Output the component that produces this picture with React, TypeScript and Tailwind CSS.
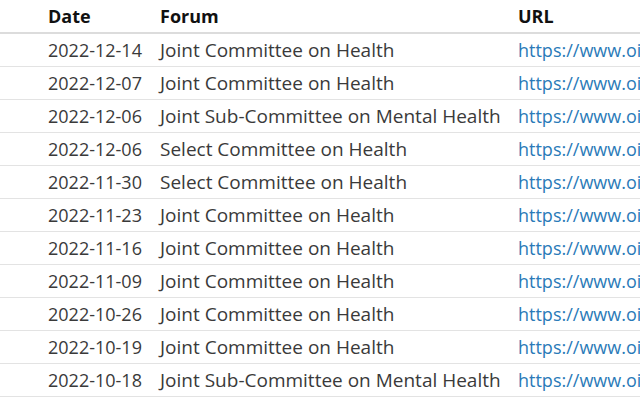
const rows: [string, string][] = [
  ["2022-12-14", "Joint Committee on Health"],
  ["2022-12-07", "Joint Committee on Health"],
  ["2022-12-06", "Joint Sub-Committee on Mental Health"],
  ["2022-12-06", "Select Committee on Health"],
  ["2022-11-30", "Select Committee on Health"],
  ["2022-11-23", "Joint Committee on Health"],
  ["2022-11-16", "Joint Committee on Health"],
  ["2022-11-09", "Joint Committee on Health"],
  ["2022-10-26", "Joint Committee on Health"],
  ["2022-10-19", "Joint Committee on Health"],
  ["2022-10-18", "Joint Sub-Committee on Mental Health"],
];

export default function App() {
  return (
    <div
      className="w-[640px] h-[400px] overflow-hidden bg-white text-[18px] text-[#3a3a3a]"
      style={{ fontFamily: '"Open Sans", "Noto Sans", sans-serif' }}
    >
      <div className="w-[900px]">
        {/* Header */}
        <div className="flex h-[34px] items-center border-b-2 border-[#dcdcdc] font-bold text-[#111]">
          <div className="w-[160px] shrink-0 pl-12">Date</div>
          <div className="w-[358px] shrink-0">Forum</div>
          <div className="flex-1">URL</div>
        </div>

        {rows.map(([date, forum], i) => (
          <div key={i} className="flex h-[33px] items-center border-b border-[#e3e3e3]">
            <div className="w-[160px] shrink-0 whitespace-nowrap pl-12">{date}</div>
            <div className="w-[358px] shrink-0 whitespace-nowrap text-[19px]">{forum}</div>
            <div className="flex-1 whitespace-nowrap">
              <a href="#" className="text-[#2a7ab8]">
                https://www.oireachtas.ie/en/debates/
              </a>
            </div>
          </div>
        ))}
      </div>
    </div>
  );
}
